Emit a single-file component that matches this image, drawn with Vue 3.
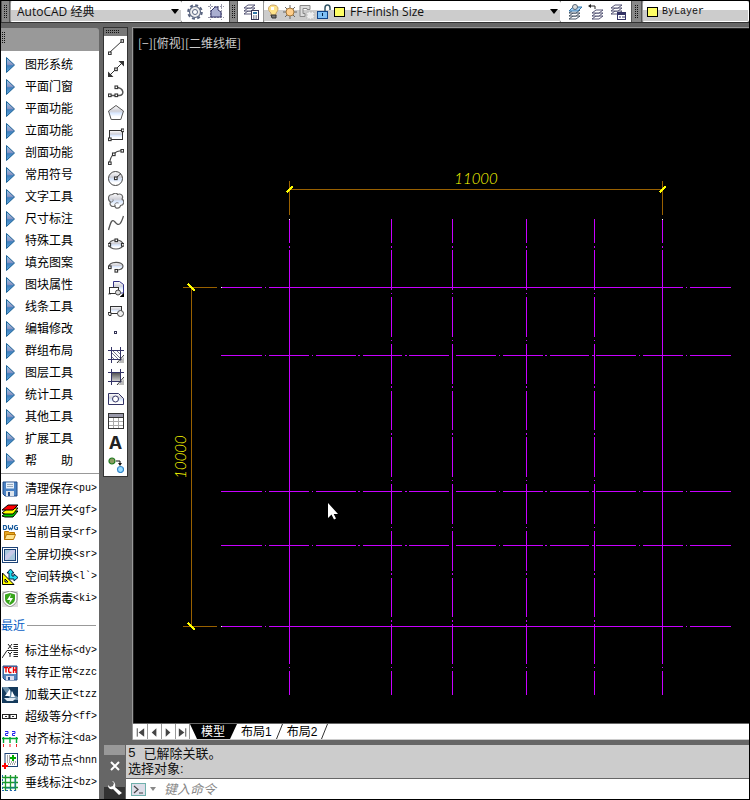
<script setup>
import { ref } from 'vue'

const sq = (x, y) => `<rect x="${x - 1}" y="${y - 1}" width="2.6" height="2.6" fill="#fff" stroke="#333" stroke-width="1.1"/>`
const layers = (x, y, c) => [6, 3, 0].map((d) => `<path d="M${x} ${y + d + 3}l4-3h7l-4 3z" fill="#fff" stroke="${c}" stroke-width=".9"/>`).join('')

const menu = ['图形系统', '平面门窗', '平面功能', '立面功能', '剖面功能', '常用符号', '文字工具', '尺寸标注', '特殊工具', '填充图案', '图块属性', '线条工具', '编辑修改', '群组布局', '图层工具', '统计工具', '其他工具', '扩展工具', '帮\u3000\u3000助']

const commands = [
  { label: '清理保存', key: '<pu>', icon: '<path d="M1 1h14v14H3l-2-2z" fill="#4a82c4" stroke="#234a86"/><rect x="4" y="1.5" width="8" height="6" fill="#e8f0fa"/><path d="M5 3.500h6M5 5.500h6" stroke="#9ab"/><rect x="4" y="10" width="8" height="5" fill="#dde4ec"/><rect x="6" y="11" width="2" height="4" fill="#234a86"/>' },
  { label: '归层开关', key: '<gf>', icon: '<path d="M0 13l6-5h10l-5 6H3z" fill="#0c0" stroke="#000"/><path d="M0 10l6-5h10l-5 6H3z" fill="#ff0" stroke="#000"/><path d="M0 7l6-5h10l-5 5H3z" fill="#f00" stroke="#000"/>' },
  { label: '当前目录', key: '<rf>', icon: '<path d="M1.500.5v4h2l1-1v-2l-1-1zM6.500 0v3l1 1.500 1-1.500 1 1.500 1-1.500V0M15.500.5h-2l-1 1v2l1 1h2v-2h-1" fill="none" stroke="#175a9c" stroke-width="1.200"/><path d="M2.500 14.500v-8h4l1 1h5v2" fill="#e9a820" stroke="#b87400"/><path d="M2.500 14.500l2-5h9l-2 5z" fill="#ffe28a" stroke="#b87400"/>' },
  { label: '全屏切换', key: '<sr>', icon: '<rect x=".5" y=".5" width="15" height="15" fill="#fff" stroke="#1c4377"/><rect x="2.500" y="2.500" width="11" height="11" fill="#a9c7dc" stroke="#1c4377"/><path d="M3 13V9l6-6h4v2l-8 8z" fill="#c8c9e8"/>' },
  { label: '空间转换', key: '<l`>', icon: '<path d="M.5 4v11.500H12z" fill="#ff0" stroke="#000"/><path d="M3 10v3h3z" fill="#fff" stroke="#000"/><path d="M7 9V4H5l3.500-4L12 4h-2v3h2V5l4 3.500-4 3.500v-2H7z" fill="#2de" stroke="#024"/>' },
  { label: '查杀病毒', key: '<ki>', icon: '<rect width="16" height="16" fill="#ddd"/><path d="M8 0l7 2v6c0 4-3 6-7 8-4-2-7-4-7-8V2z" fill="#fff" stroke="#888"/><path d="M8 2l5 1.500V8c0 3-2 4.500-5 6-3-1.500-5-3-5-6V3.500z" fill="#38a51c"/><path d="M9 3L5 9h3l-1 4 4-6H8z" fill="#fff"/>' },
]

const recent = [
  { label: '标注坐标', key: '<dy>', icon: '<path d="M0 15L5 7.500h11M6 1l4 5M10 1L6 6M6 9l2 2 2-2M8 11v3M11.500 1.500H16M11.500 3.500H16M11.500 5.500H16M11.500 9.500H16M11.500 11.500H16M11.500 13.500H16" fill="none" stroke="#222"/>' },
  { label: '转存正常', key: '<zzc', icon: '<path d="M1 1h14v14H3l-2-2z" fill="#5686bd" stroke="#234a86"/><rect x="2" y="2" width="12" height="7" fill="#fff"/><path d="M2 2.500h4M4 2.500v5M9.500 2.500h-2l-.8 1v3l.8 1h2M11.500 2v6M14 2v6M11.500 5H14" fill="none" stroke="#e00" stroke-width="1.400"/><rect x="4" y="11" width="8" height="4" fill="#dde"/><rect x="6" y="12" width="2" height="3" fill="#234a86"/>' },
  { label: '加载天正', key: '<tzz', icon: '<rect width="16" height="16" fill="#143a5c"/><path d="M0 0h6l6 8 4 2v3H9z" fill="#6d90aa"/><path d="M8 2v7H3zM10 4l3 6h-4z" fill="#fff"/><path d="M2 11h12l-3 3H5z" fill="#dfeaf2"/>' },
  { label: '超级等分', key: '<ff>', icon: '<rect x=".5" y="5.500" width="14" height="4" fill="#fff" stroke="#222"/><path d="M7.500 5v5" stroke="#222" stroke-width="2"/><path d="M3 7.500h2M10 7.500h2" stroke="#333"/>' },
  { label: '对齐标注', key: '<da>', icon: '<path d="M3 .5h3v2H3.500v2H6M10 .5h3v2h-2.500v2H13" fill="none" stroke="#22e"/><path d="M0 7.500h16M1.500 6v6M8 6v6M14.500 6v6" stroke="#0a3" stroke-width="1.400"/><path d="M1.500 13v3M8 13v3M14.500 13v3" stroke="#e22"/>' },
  { label: '移动节点', key: '<hnn', icon: '<rect x="3" y=".5" width="12.500" height="13" fill="#fff" stroke="#1e4477"/><path d="M5 3h4M5 5h3M5 7h4M5 9h9M6 11h7" stroke="#555" stroke-dasharray="1 1"/><path d="M11 2v6M8 5h6" stroke="#0a0" stroke-width="2"/><path d="M3 10v6M0 13h6" stroke="#f00" stroke-width="2"/>' },
  { label: '垂线标注', key: '<bz>', icon: '<path d="M0 2.500h16M0 7.500h16M0 12.500h16M3.500 0v16M8.500 0v16M13.500 0v16" stroke="#1b9a2c" stroke-width="1.300"/><path d="M0 15.500h16M.5 0v16" stroke="#26a" stroke-dasharray="2 2"/><path d="M4 13h9V3" stroke="#157a9c" fill="none"/>' },
]

const tools = [
  { name: '直线', icon: `<path d="M1 14L14 2" stroke="#333"/>${sq(1.500, 14)}${sq(14, 1.700)}` },
  { name: '构造线', icon: `<path d="M2 14L14 2" stroke="#333"/><path d="M10.500 0H16v5.500zM0 10.500V16h5.500z" fill="#333"/>${sq(7.700, 8)}` },
  { name: '多段线', icon: `<path d="M2 12.500h9c6 0 5-8-3-8" fill="none" stroke="#555" stroke-width="1.500"/>${sq(1.500, 12)}${sq(8, 12)}${sq(8, 4)}` },
  { name: '多边形', icon: '<path d="M8 .5l7.500 5.500-2.700 8.500H3.200L.5 6z" fill="url(#shade)" stroke="#555"/>' },
  { name: '矩形', icon: `<rect x="1.500" y="3.500" width="13" height="9" fill="url(#shade)" stroke="#333"/>${sq(1.500, 12)}${sq(14.500, 3)}` },
  { name: '圆弧', icon: `<path d="M1.500 14C3 5 7 2 14 1.500" fill="none" stroke="#444" stroke-width="1.200"/>${sq(1.500, 14)}${sq(5.500, 5)}${sq(14, 1.500)}` },
  { name: '圆', icon: `<circle cx="7.500" cy="7.500" r="7" fill="url(#shade)" stroke="#444"/><path d="M8 7l5-4.500" stroke="#333"/>${sq(7.500, 7)}` },
  { name: '修订云线', icon: '<path d="M4.500 1.500C7-.5 9 0 9.500 1.500c3-1.500 6.500 1 4.500 4.500 3 2 2 6.500-1.500 6.500-.5 3.500-5.500 3.500-5.500.5-3 1.500-6-1-4.500-4C-.5 7-.5 1.500 4.500 1.500z" fill="url(#shade)" stroke="#666" stroke-width="1.200"/><path d="M2.500 9c2 .5 3-1 2.500-2.500M7 13c-1-2 1-4 3.500-3" fill="none" stroke="#777"/>' },
  { name: '样条曲线', icon: '<path d="M.5 15C3 6 4 4 7 7c4 5 6 2 8.500-6" fill="none" stroke="#555" stroke-width="1.300"/>' },
  { name: '椭圆', icon: `<ellipse cx="8" cy="7.500" rx="7" ry="4.500" fill="url(#shade)" stroke="#555" stroke-width="1.200"/>${sq(1, 7.500)}${sq(14.500, 7.500)}${sq(8, 3)}` },
  { name: '椭圆弧', icon: `<path d="M1 8C1 2 15 2 15 7c0 3-4 4-7 4" fill="url(#shade)" stroke="#555" stroke-width="1.200"/>${sq(1.500, 8)}${sq(8, 11.500)}` },
  { name: '插入块', icon: '<path d="M5.500 9V.5h6l4 3V12h-4" fill="url(#shade)" stroke="#338"/><rect x="1.500" y="6.500" width="9" height="6" fill="#fff" stroke="#333"/><circle cx="10" cy="11.500" r="2.500" fill="#ddd" stroke="#444"/><path d="M0 13h3M16 12v4h-4z" stroke="#000" fill="#000" stroke-width=".5"/>' },
  { name: '创建块', icon: '<rect x="2.500" y="3.500" width="11" height="7" fill="url(#shade)" stroke="#333"/><circle cx="12.500" cy="10.500" r="3" fill="#eee" stroke="#444"/><path d="M0 9.500h3v3H1z" fill="#fff" stroke="#333"/>' },
  { name: '点', icon: '<rect x="6.500" y="6.500" width="2" height="2" fill="#fff" stroke="#335"/>' },
  { name: '图案填充', icon: '<path d="M3.500 3.500h9v9h-9z" fill="#fff"/><path d="M4 10l3 3M4 6l7 7M5 4l8 8M9 4l4 4" stroke="#778"/><path d="M3.500 0v16M12.500 0v16M0 3.500h16M0 12.500h16" stroke="#336"/><path d="M16 10v6h-6z" fill="#bbb"/><path d="M9 16l7-8" stroke="#333"/>' },
  { name: '渐变色', icon: '<path d="M4 4h8v9H4z" fill="url(#grad)"/><path d="M3.500 0v16M12.500 0v16M0 3.500h16M0 12.500h16" stroke="#336"/><path d="M16 10v6h-6z" fill="#bbb"/><path d="M9 16l7-8" stroke="#333"/>' },
  { name: '面域', icon: '<path d="M.5 13.500v-11h10l5 5v6z" fill="url(#shade)" stroke="#336"/><circle cx="7.500" cy="8" r="3" fill="#fff" stroke="#336"/>' },
  { name: '表格', icon: '<rect x=".5" y=".5" width="15" height="15" fill="#fff" stroke="#333"/><rect x="1" y="1" width="14" height="3" fill="#99a"/><path d="M1 4.500h14" stroke="#333"/><path d="M1 8.500h14M1 12.500h14M5.500 5v10M10.500 5v10" stroke="#aaa"/>' },
  { name: '多行文字', letter: 'A' },
  { name: '添加选定对象', icon: '<circle cx="4" cy="4" r="3" fill="#8b9a62" stroke="#1e7a1e" stroke-width="1.200"/><circle cx="12.500" cy="12.500" r="3" fill="#9adcff" stroke="#38c" stroke-width="1.200"/><path d="M8 4h4v3" fill="none" stroke="#111"/><path d="M10 6h4l-2 3z" fill="#111"/>' },
]

const workspaceTools = [
  { name: '工作空间设置', icon: '<g fill="none" stroke="#5a6580"><circle cx="8" cy="8" r="6.800" stroke-width="2" stroke-dasharray="3 2.340"/><circle cx="8" cy="8" r="5.500" fill="#eee" stroke-width="1.200"/><circle cx="8" cy="8" r="2.500" fill="#fff"/></g>' },
  { name: '我的工作空间', icon: '<path d="M2.500 0v16M13.500 0v16M0 2.500h16M0 13.500h16" stroke="#99a" stroke-dasharray="2 1"/><path d="M3 13V7l4-4h3v3l3 2v5z" fill="#a9aed0" stroke="#336"/>' },
]

const layerTools = [
  { name: '将对象的图层设为当前', icon: layers(2, 6, '#345') + '<path d="M2 7l4-4h9l-4 4z" fill="#a9d2f5" stroke="#37a"/><circle cx="8" cy="3" r="2.500" fill="#ddd" stroke="#567"/>' },
  { name: '上一个图层', icon: layers(4, 6, '#446') + '<path d="M1 2h6v3" fill="none" stroke="#222"/><path d="M0 2l3-2v4z" fill="#222"/>' },
  { name: '图层状态管理器', icon: layers(1, 1, '#446') + '<rect x="7.500" y="8.500" width="8" height="7" fill="#fff" stroke="#336"/><path d="M8 10h7" stroke="#336" stroke-width="2"/><path d="M9 13h2M12 13h3" stroke="#336"/>' },
]

const layerManager = layers(1, 1, '#446') + '<rect x="8.500" y="6.500" width="7" height="9" fill="#fff" stroke="#335"/><rect x="10" y="8" width="4" height="2" fill="#37a"/><path d="M10 12h4M10 14h4" stroke="#335" stroke-dasharray="1 .5"/>'

const layerState = [
  '<path d="M8 1c6 0 6 5 3 8v3H6V9C2 6 3 1 8 1z" fill="#ffe48a" stroke="#c9a368"/><path d="M6 3h3v3H6z" fill="#fff"/><path d="M6 11h5v3H7z" fill="#777" stroke="#333"/>',
  '<path d="M8 1v14M1 8h14M3 3l10 10M13 3L3 13" stroke="#666"/><circle cx="8" cy="8" r="4" fill="#ffcf8c" stroke="#a5793e"/>',
  '<path d="M1 1.500h10v4H8v-1H4v5h2v3H1z" fill="#ddd" stroke="#888"/><path d="M8 8h7v7H8z" fill="#eee" stroke="#bbb" stroke-dasharray="2 1"/>',
  '<path d="M9 8V4c0-4 5-4 5 0v2" fill="none" stroke="#356" stroke-width="1.500"/><rect x="1.500" y="7.500" width="10" height="7" fill="#7fc0f5" stroke="#148"/><path d="M6.500 9v3" stroke="#024"/>',
]

// Drawing geometry, in the drawing's own pixel grid.
const rowDashes = [[221, 262], [265, 266], [269, 309], [312, 313], [316, 356], [358, 360], [363, 402], [405, 407], [409, 449], [456, 496], [499, 500], [503, 543], [545, 547], [550, 589], [592, 594], [596, 636], [639, 640], [643, 683], [686, 687], [690, 731]]
const colDashes = [[219, 243], [246, 248], [250, 290], [293, 294], [297, 337], [340, 341], [344, 384], [386, 388], [391, 430], [433, 435], [437, 477], [480, 481], [484, 524], [527, 528], [531, 571], [573, 575], [578, 617], [620, 622], [624, 664], [667, 668], [671, 695]]
const rowSolid = [[221, 262], [265, 266], [269, 683], [686, 687], [690, 731]]
const colSolid = [[219, 243], [246, 248], [250, 664], [667, 668], [671, 695]]
const toPath = (segs, at, vertical) => segs.map(([a, b]) => (vertical ? `M${at + 0.5} ${a}V${b}` : `M${a} ${at + 0.5}H${b}`)).join('')
const axes = [
  ...[287, 626].map((y) => toPath(rowSolid, y, false)),
  ...[355, 491, 545].map((y) => toPath(rowDashes, y, false)),
  ...[289, 662].map((x) => toPath(colSolid, x, true)),
  ...[391, 452, 526, 594].map((x) => toPath(colDashes, x, true)),
].join('')

const command = ref('')
</script>

<template>
  <div class="app">
    <svg class="defs" width="0" height="0" aria-hidden="true">
      <defs>
        <linearGradient id="shade" x1="0" y1="0" x2="0" y2="1"><stop offset="0" stop-color="#fff" /><stop offset=".4" stop-color="#cfcfd6" /><stop offset=".55" stop-color="#d9e8ff" /><stop offset=".8" stop-color="#fff" /></linearGradient>
        <linearGradient id="grad" x1="0" y1="0" x2="0" y2="1"><stop offset="0" stop-color="#555" /><stop offset="1" stop-color="#ddd" /></linearGradient>
        <linearGradient id="play" x1="0" y1="0" x2="0" y2="1"><stop offset="0" stop-color="#8fc6ea" /><stop offset=".45" stop-color="#9098c4" /><stop offset=".55" stop-color="#3f7fbd" /><stop offset="1" stop-color="#5aa5dc" /></linearGradient>
      </defs>
    </svg>

    <header class="topbar">
      <span class="grip"><i class="dots tall"></i></span>
      <div class="combo workspace">
        <select aria-label="工作空间"><option>AutoCAD 经典</option></select>
        <svg class="arrow" viewBox="0 0 8 5"><path d="M0 0h8L4 5z" /></svg>
      </div>
      <div class="group">
        <button v-for="t in workspaceTools" :key="t.name" :aria-label="t.name"><svg viewBox="0 0 16 16" v-html="t.icon"></svg></button>
      </div>
      <span class="grip"><i class="dots tall"></i></span>
      <div class="group">
        <button aria-label="图层特性管理器"><svg viewBox="0 0 16 16" v-html="layerManager"></svg></button>
      </div>
      <div class="combo layer">
        <svg v-for="(s, i) in layerState" :key="i" class="state" viewBox="0 0 16 16" v-html="s"></svg>
        <i class="swatch"></i>
        <select aria-label="图层"><option>FF-Finish Size</option></select>
        <svg class="arrow" viewBox="0 0 8 5"><path d="M0 0h8L4 5z" /></svg>
      </div>
      <div class="group">
        <button v-for="t in layerTools" :key="t.name" :aria-label="t.name"><svg viewBox="0 0 16 16" v-html="t.icon"></svg></button>
      </div>
      <span class="grip"><i class="dots tall"></i></span>
      <div class="combo color">
        <i class="swatch"></i>
        <select aria-label="颜色" class="mono"><option>ByLayer</option></select>
      </div>
    </header>

    <main class="main">
      <aside class="panel">
        <div class="panel-head"><i class="dots"></i></div>
        <nav class="panel-body">
          <button v-for="m in menu" :key="m" class="entry">
            <svg class="play" viewBox="0 0 9 16"><path d="M.5 .5L8.500 8L.5 15.500z" fill="url(#play)" stroke="#1d6296" /></svg>
            <span>{{ m }}</span>
          </button>
          <hr />
          <button v-for="c in commands" :key="c.key" class="entry">
            <svg class="pic" viewBox="0 0 16 16" v-html="c.icon"></svg>
            <span>{{ c.label }}</span><span class="key">{{ c.key }}</span>
          </button>
          <h2 class="recent">最近</h2>
          <button v-for="c in recent" :key="c.key" class="entry">
            <svg class="pic" viewBox="0 0 16 16" v-html="c.icon"></svg>
            <span>{{ c.label }}</span><span class="key">{{ c.key }}</span>
          </button>
        </nav>
      </aside>

      <section class="work">
        <div class="upper">
          <div class="palette">
            <div class="palette-head"><i class="dots wide"></i></div>
            <button v-for="t in tools" :key="t.name" :aria-label="t.name">
              <span v-if="t.letter" class="letter">{{ t.letter }}</span>
              <svg v-else viewBox="0 0 16 16" v-html="t.icon"></svg>
            </button>
          </div>

          <div class="viewer">
            <div class="canvas">
              <div class="view-label">[−][俯视][二维线框]</div>
              <svg class="drawing" shape-rendering="crispEdges">
                <g transform="translate(-134 -29)" fill="none">
                  <path :d="axes" stroke="#c800ff" />
                  <path d="M289 189.500H663M289.500 181V215M662.500 181V215M191.500 287V627M183 287.500H217M183 626.500H217" stroke="#996000" />
                  <path d="M289 219.500h1M662 219.500h1M221 287.500h1M221 626.500h1" stroke="#fff" />
                  <path d="M286.500 192.500L292.500 186.500M659.500 192.500L665.500 186.500" stroke="#ff0" stroke-width="2" />
                  <path d="M188 284L195 291M188 623L195 630" stroke="#ff0" stroke-width="1.500" />
                  <text x="476" y="184" class="dim">11000</text>
                  <text class="dim" transform="translate(186 457) rotate(-90)">10000</text>
                  <path d="M328 503v15l3.500-3.500 2.500 5 2-1-2.300-4.500H338z" fill="#fff" shape-rendering="auto" />
                </g>
              </svg>
            </div>
            <div class="tabs">
              <button class="nav" aria-label="第一个"><svg viewBox="0 0 14 14"><path d="M3.500 3v9" stroke="#444" /><path d="M11 3v9L5 7.500z" fill="#444" /></svg></button>
              <button class="nav" aria-label="上一个"><svg viewBox="0 0 14 14"><path d="M9 3v9L4 7.500z" fill="#444" /></svg></button>
              <button class="nav" aria-label="下一个"><svg viewBox="0 0 14 14"><path d="M4 3v9l5-4.500z" fill="#444" /></svg></button>
              <button class="nav" aria-label="最后一个"><svg viewBox="0 0 14 14"><path d="M3 3v9l6-4.500z" fill="#444" /><path d="M10.500 3v9" stroke="#444" /></svg></button>
              <button class="tab active">模型</button>
              <button class="tab">布局1</button>
              <svg class="slant" viewBox="0 0 7 15"><path d="M.5 15L6.500 0" stroke="#333" /></svg>
              <button class="tab">布局2</button>
              <svg class="slant" viewBox="0 0 7 15"><path d="M.5 15L6.500 0" stroke="#333" /></svg>
            </div>
          </div>
        </div>

        <footer class="console">
          <div class="console-side">
            <span class="handle"></span>
            <button aria-label="关闭"><svg width="10" height="10" viewBox="0 0 10 10"><path d="M1 1l8 8M9 1L1 9" stroke="#fff" stroke-width="2" /></svg></button>
            <button class="wrench" aria-label="自定义"><svg width="16" height="16" viewBox="0 0 16 16"><path d="M5 1l2 2-1 3-3 1-2-2c0 4 3 5 5 4l6 6 3-2-7-6c1-3-1-6-3-6z" fill="#fff" /></svg></button>
          </div>
          <div class="console-main">
            <div class="history">
              <div class="line"><span class="num">5 </span><span>已解除关联。</span></div>
              <div class="line">选择对象:</div>
            </div>
            <div class="prompt">
              <svg class="term" viewBox="0 0 15 13"><rect x=".5" y=".5" width="14" height="12" fill="#dcdde8" stroke="#6fb0ac" /><path d="M3 3l4 3.500L3 10M8 10h4" fill="none" stroke="#444" stroke-width="1.200" /></svg>
              <svg class="drop" viewBox="0 0 6 4"><path d="M0 0h6L3 4z" fill="#888" /></svg>
              <input v-model="command" type="text" aria-label="命令" placeholder="键入命令" />
            </div>
          </div>
        </footer>
      </section>
    </main>
  </div>
</template>

<style>
body {
  background: #666;
}
</style>

<style scoped>
* {
  box-sizing: border-box;
}
.app {
  display: flex;
  flex-direction: column;
  min-height: 100vh;
  border: 1px solid #000;
  background: #666;
  color: #000;
  font: 12px/14px "Liberation Sans", "Noto Sans CJK SC", sans-serif;
}
.defs {
  position: absolute;
}
button {
  display: flex;
  align-items: center;
  justify-content: center;
  padding: 0;
  border: 0;
  background: none;
  color: inherit;
  font: inherit;
}
.dots {
  display: block;
  width: 4px;
  height: 12px;
  background: radial-gradient(circle at 0 0, #111 1px, transparent 1px) 0 0 / 2px 2px;
}
.dots.wide {
  width: 14px;
  height: 4px;
}
.dots.tall {
  height: 14px;
}

/* Top toolbars */
.topbar {
  display: grid;
  grid-template-columns: 9px minmax(0, 172fr) 47px 9px 25px minmax(0, 298fr) 70px 11px minmax(0, 107fr);
  height: 22px;
  border-bottom: 1px solid #333;
}
.grip {
  display: flex;
  align-items: center;
  justify-content: center;
  border: solid #555;
  border-width: 0 1px;
  background: #888;
}
.combo {
  display: flex;
  align-items: center;
  min-width: 0;
  border: solid #fff;
  border-width: 1px 1px 1px 0;
  border-left: 1px solid #999;
  border-radius: 2px;
  background: linear-gradient(#fff 8px, #ccc 8px);
}
.combo select {
  flex: 1;
  min-width: 0;
  height: 18px;
  padding: 0;
  border: 0;
  appearance: none;
  background: none;
  color: #111;
  font: 12px "Open Sans", "Noto Sans CJK SC", sans-serif;
}
.combo select.mono {
  font: 10px "Liberation Mono", monospace;
}
.workspace {
  padding-left: 6px;
}
.layer {
  gap: 1px;
  padding-left: 1px;
}
.color {
  padding-left: 3px;
}
.arrow {
  flex: none;
  width: 8px;
  height: 5px;
  margin-right: 2px;
}
.state {
  flex: none;
  width: 16px;
  height: 16px;
}
.swatch {
  flex: none;
  width: 11px;
  height: 10px;
  margin: 0 4px 0 1px;
  border: 1px solid #000;
  background: #ff6;
}
.group {
  display: flex;
  align-items: center;
  justify-content: space-evenly;
  background: #fff;
}
.group svg,
.palette svg,
.pic {
  display: block;
  width: 16px;
  height: 16px;
}

.main {
  display: flex;
  flex: 1;
  padding-top: 4px;
}

/* Left menu */
.panel {
  display: flex;
  flex: none;
  flex-direction: column;
  width: 98px;
  margin-top: 1px;
}
.panel-head {
  height: 23px;
  padding: 4px 1px;
  border-top-right-radius: 3px;
  background: #999;
}
.panel-body {
  flex: 1;
  padding-top: 3px;
  background: #fff;
}
.entry {
  justify-content: flex-start;
  width: 100%;
  height: 22px;
  overflow: hidden;
  white-space: pre;
}
.play {
  flex: none;
  width: 9px;
  height: 16px;
  margin: 0 10px 0 5px;
}
.pic {
  flex: none;
  margin: 0 7px 0 1px;
}
.key {
  font: 10px/14px "Liberation Mono", monospace;
}
hr {
  height: 1px;
  margin: 1px 0 4px;
  border: 0;
  background: #999;
}
.recent {
  display: flex;
  align-items: center;
  gap: 2px;
  height: 22px;
  margin: 4px 3px 4px 0;
  color: #0a5fc4;
  font: 12px/14px "Noto Sans CJK SC", sans-serif;
}
.recent::after {
  flex: 1;
  height: 1px;
  background: #999;
  content: "";
}

/* Draw palette */
.work {
  display: flex;
  flex: 1;
  flex-direction: column;
  min-width: 0;
}
.upper {
  display: flex;
  flex: 1;
  gap: 4px;
  padding-left: 4px;
}
.palette {
  flex: none;
  align-self: flex-start;
  width: 25px;
  border: 1px solid #333;
  border-top-width: 0;
  background: #fff;
}
.palette-head {
  height: 9px;
  padding: 2px;
  border-top: 1px solid #333;
  background: #777;
}
.palette button {
  width: 100%;
  height: 22px;
}
.letter {
  color: #222;
  font: bold 18px/20px Inter, "Liberation Sans", sans-serif;
}

/* Drawing area */
.viewer {
  display: flex;
  flex: 1;
  flex-direction: column;
  min-width: 0;
  border: solid #999;
  border-width: 1px 0 0 1px;
}
.canvas {
  position: relative;
  flex: 1;
  overflow: hidden;
  border: solid #222;
  border-width: 1px 0 0 1px;
  background: #000;
}
.view-label {
  padding: 7px 4px;
  color: #ccc;
  font: 12px/14px "Noto Sans CJK SC", sans-serif;
}
.drawing {
  position: absolute;
  top: 0;
  left: 0;
  width: 100%;
  height: 100%;
}
.dim {
  fill: #ff0;
  font: italic 300 15px "Lato Light", Lato, "Open Sans", sans-serif;
  text-anchor: middle;
}
.tabs {
  display: flex;
  height: 17px;
  padding-left: 1px;
  border-top: 1px solid #666;
  border-bottom: 1px solid #ccc;
  background: #fff;
}
.nav {
  width: 14px;
  border-right: 1px solid #999;
}
.nav svg {
  width: 14px;
  height: 14px;
}
.tab {
  padding: 0 4px;
}
.tab.active {
  padding: 0 12px 0 11px;
  background: #000;
  clip-path: polygon(0 0, 100% 0, calc(100% - 7px) 100%, 7px 100%);
  color: #fff;
}
.slant {
  width: 7px;
  height: 15px;
}

/* Command console */
.console {
  display: flex;
  margin-top: 5px;
  padding-left: 5px;
}
.console-side {
  display: flex;
  flex: none;
  flex-direction: column;
  width: 22px;
}
.console-side button {
  flex: 1;
}
.handle {
  height: 10px;
  margin-right: 1px;
  background: #999;
}
.console-side .wrench {
  margin-right: 1px;
  background: linear-gradient(transparent 10px, #333 10px);
}
.console-main {
  flex: 1;
  min-width: 0;
}
.history {
  padding: 1px 2px 2px;
  border-bottom: 1px solid #666;
  background: #ccc;
  color: #111;
  font: 13px/15px "Liberation Sans", "Noto Sans CJK SC", sans-serif;
}
.line {
  display: flex;
  align-items: center;
  height: 15px;
}
.num {
  font-family: "Liberation Mono", monospace;
  white-space: pre;
}
.prompt {
  display: flex;
  align-items: center;
  height: 20px;
  padding-left: 5px;
  background: #fff;
}
.term {
  width: 15px;
  height: 13px;
}
.drop {
  width: 6px;
  height: 4px;
  margin: 0 8px 0 4px;
}
.prompt input {
  flex: 1;
  min-width: 0;
  height: 18px;
  padding: 0;
  border: 0;
  outline: 0;
  background: none;
  font: 13px "Liberation Sans", "Noto Sans CJK SC", sans-serif;
}
.prompt input::placeholder {
  color: #888;
  font-style: italic;
}
</style>
